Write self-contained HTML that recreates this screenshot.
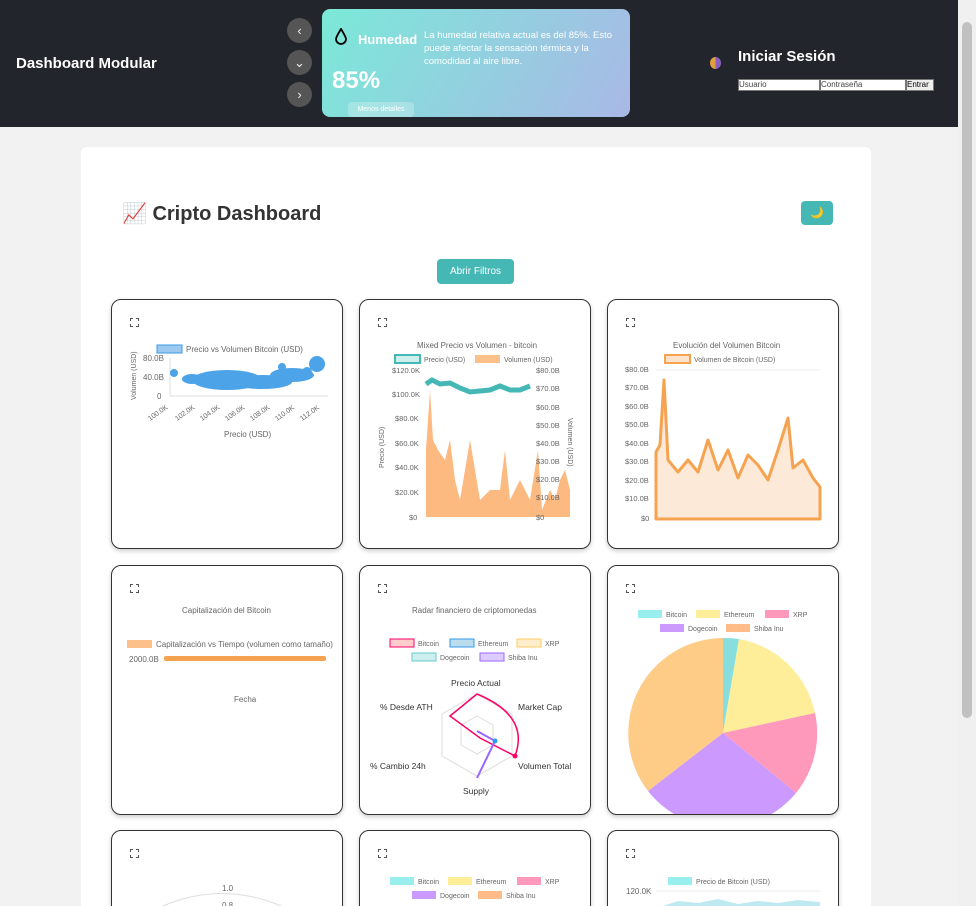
<!DOCTYPE html><html><head><meta charset="utf-8"><style>
*{box-sizing:border-box;margin:0;padding:0}
html,body{width:976px;height:906px;overflow:hidden}
body{background:#f2f2f2;font-family:"Liberation Sans",sans-serif;position:relative}
.hdr{position:absolute;left:0;top:0;width:958px;height:127px;background:#22252c;color:#fff}
.sb{position:absolute;right:0;top:0;width:18px;height:906px;background:#f0f0f0}
.sb .th{position:absolute;left:4px;top:22px;width:10px;height:696px;background:#c1c1c1;border-radius:5px}
.nav{position:absolute;left:287px;width:25px;height:25px;border-radius:50%;background:#555;color:#eee;font-size:13px;text-align:center;line-height:25px}
.card{position:absolute;left:322px;top:9px;width:308px;height:108px;border-radius:8px;background:linear-gradient(120deg,#7be9d8,#a9b8e6)}
.wrap{position:absolute;left:81px;top:147px;width:790px;height:800px;background:#fff;border-radius:6px}
.c{position:absolute;width:232px;height:250px;border:1px solid #333;border-radius:10px;background:#fff;box-shadow:0 2px 5px rgba(0,0,0,.2);overflow:hidden}
.ic{position:absolute;left:18px;top:18px;width:9px;height:9px;border:1px dashed #555}
svg text{font-family:"Liberation Sans",sans-serif;fill:#666}
</style></head><body>
<div class="hdr">
<div style="position:absolute;left:16px;top:55px;font-size:15px;font-weight:bold">Dashboard Modular</div>
<div class="nav" style="top:18px">‹</div><div class="nav" style="top:50px">⌄</div><div class="nav" style="top:82px">›</div>
<div class="card">
<svg style="position:absolute;left:13px;top:19px" width="12" height="17"><path d="M6 1 C3 6 1 9 1 11 A5 5 0 0 0 11 11 C11 9 9 6 6 1Z" fill="none" stroke="#000" stroke-width="1.8"/></svg>
<div style="position:absolute;left:36px;top:23px;font-size:13px;font-weight:bold">Humedad</div>
<div style="position:absolute;left:102px;top:20px;width:200px;font-size:9.5px;line-height:13px">La humedad relativa actual es del 85%. Esto puede afectar la sensación térmica y la comodidad al aire libre.</div>
<div style="position:absolute;left:10px;top:58px;font-size:24px;font-weight:bold">85%</div>
<div style="position:absolute;left:26px;top:93px;width:66px;height:15px;background:rgba(255,255,255,.25);border-radius:4px;font-size:7px;text-align:center;line-height:15px">Menos detalles</div>
</div>
<div style="position:absolute;left:710px;top:57px;width:11px;height:12px;border-radius:50%;background:linear-gradient(90deg,#e0a040 50%,#8a5fc0 50%)"></div>
<div style="position:absolute;left:738px;top:48px;font-size:15px;font-weight:bold">Iniciar Sesión</div>
<div style="position:absolute;left:738px;top:79px;font-size:8px;color:#444">
<span style="position:absolute;left:0;width:82px;height:12px;background:#fff;border:1px solid #777">Usuario</span>
<span style="position:absolute;left:82px;width:86px;height:12px;background:#fff;border:1px solid #777">Contraseña</span>
<span style="position:absolute;left:168px;width:28px;height:12px;background:#eee;border:1px solid #777;color:#000">Entrar</span></div>
</div>
<div class="sb"><div class="th"></div></div>
<div class="wrap">
<div style="position:absolute;left:41px;top:54px;font-size:20px;font-weight:bold;color:#333">📈 Cripto Dashboard</div>
<div style="position:absolute;left:720px;top:54px;width:32px;height:24px;background:#45b8b5;border-radius:4px;font-size:11px;text-align:center;line-height:24px">🌙</div>
<div style="position:absolute;left:356px;top:112px;width:77px;height:25px;background:#45b8b5;border-radius:4px;color:#fff;font-size:10px;text-align:center;line-height:25px">Abrir Filtros</div>
</div>

<div class="c" style="left:111px;top:299px"><div class="ic"></div>
<svg width="232" height="250"><rect x="45" y="45" width="25" height="8" fill="#9cc9ef" stroke="#3a9ae6"/><text x="74" y="52" font-size="8">Precio vs Volumen Bitcoin (USD)</text>
<text transform="translate(24,100) rotate(-90)" font-size="7">Volumen (USD)</text><text x="31" y="61" font-size="8">80.0B</text><text x="31" y="80" font-size="8">40.0B</text><text x="45" y="99" font-size="8">0</text>
<path d="M58 96 H216 M58 58 V96" stroke="#ddd" fill="none"/>
<g fill="#3a9ae6" opacity=".9"><ellipse cx="80" cy="79" rx="10" ry="5"/><ellipse cx="115" cy="80" rx="35" ry="10"/><ellipse cx="150" cy="82" rx="30" ry="7"/><ellipse cx="180" cy="75" rx="22" ry="7"/><circle cx="205" cy="64" r="8"/><circle cx="195" cy="72" r="5"/><circle cx="62" cy="73" r="4"/><circle cx="170" cy="67" r="4"/></g>
<g font-size="7" fill="#666"><text transform="translate(38,121) rotate(-35)">100.0K</text><text transform="translate(65,121) rotate(-35)">102.0K</text><text transform="translate(90,121) rotate(-35)">104.0K</text><text transform="translate(115,121) rotate(-35)">106.0K</text><text transform="translate(140,121) rotate(-35)">108.0K</text><text transform="translate(165,121) rotate(-35)">110.0K</text><text transform="translate(190,121) rotate(-35)">112.0K</text></g>
<text x="112" y="137" font-size="8">Precio (USD)</text></svg></div>

<div class="c" style="left:359px;top:299px"><div class="ic"></div>
<svg width="232" height="250"><text x="57" y="48" font-size="8">Mixed Precio vs Volumen - bitcoin</text>
<rect x="35" y="55" width="25" height="8" fill="#cdf0ec" stroke="#45b8b5" stroke-width="2"/><text x="64" y="62" font-size="7">Precio (USD)</text><rect x="115" y="55" width="25" height="8" fill="#fcc08a"/><text x="144" y="62" font-size="7">Volumen (USD)</text>
<path d="M66 217 L66 150 L70 90 L73 140 L78 150 L85 160 L90 140 L95 180 L100 200 L110 140 L115 170 L120 200 L130 190 L140 190 L145 150 L150 200 L160 180 L170 200 L178 150 L182 210 L190 190 L195 200 L200 180 L205 170 L210 190 L210 217Z" fill="#fbad6a" opacity=".85"/>
<path d="M66 84 L72 80 L80 84 L90 83 L100 88 L110 92 L120 91 L130 90 L140 86 L150 90 L160 90 L170 86" stroke="#45b8b5" stroke-width="5" fill="none"/>
<g font-size="7.5"><text x="32" y="73">$120.0K</text><text x="32" y="97">$100.0K</text><text x="35" y="121">$80.0K</text><text x="35" y="146">$60.0K</text><text x="35" y="170">$40.0K</text><text x="35" y="195">$20.0K</text><text x="49" y="220">$0</text>
<text x="176" y="73">$80.0B</text><text x="176" y="91">$70.0B</text><text x="176" y="110">$60.0B</text><text x="176" y="128">$50.0B</text><text x="176" y="146">$40.0B</text><text x="176" y="164">$30.0B</text><text x="176" y="182">$20.0B</text><text x="176" y="200">$10.0B</text><text x="176" y="220">$0</text></g>
<text transform="translate(24,168) rotate(-90)" font-size="7">Precio (USD)</text><text transform="translate(208,118) rotate(90)" font-size="7">Volumen (USD)</text></svg></div>

<div class="c" style="left:607px;top:299px"><div class="ic"></div>
<svg width="232" height="250"><text x="65" y="48" font-size="8">Evolución del Volumen Bitcoin</text><rect x="57" y="55" width="25" height="8" fill="#fde3cc" stroke="#f5a350" stroke-width="2"/><text x="86" y="62" font-size="7">Volumen de Bitcoin (USD)</text>
<path d="M48 70 H212 M48 219 H212" stroke="#eee"/>
<path d="M48 152 L52 145 L56 80 L60 160 L70 172 L80 160 L90 172 L100 140 L110 170 L120 150 L130 178 L140 155 L150 165 L160 180 L170 150 L180 118 L185 168 L195 160 L205 178 L212 187 L212 219 L48 219Z" fill="#fde9d8" stroke="#f5a350" stroke-width="3" stroke-linejoin="round"/>
<g font-size="7.5"><text x="17" y="72">$80.0B</text><text x="17" y="90">$70.0B</text><text x="17" y="109">$60.0B</text><text x="17" y="127">$50.0B</text><text x="17" y="146">$40.0B</text><text x="17" y="164">$30.0B</text><text x="17" y="183">$20.0B</text><text x="17" y="201">$10.0B</text><text x="33" y="221">$0</text></g></svg></div>

<div class="c" style="left:111px;top:565px"><div class="ic"></div>
<svg width="232" height="250"><text x="70" y="47" font-size="8">Capitalización del Bitcoin</text><rect x="15" y="74" width="25" height="8" fill="#fcc08a"/><text x="44" y="81" font-size="8">Capitalización vs Tiempo (volumen como tamaño)</text>
<text x="17" y="96" font-size="8">2000.0B</text><rect x="52" y="90" width="162" height="5" rx="2" fill="#f5a350"/><text x="122" y="136" font-size="8">Fecha</text></svg></div>

<div class="c" style="left:359px;top:565px"><div class="ic"></div>
<svg width="232" height="250"><text x="52" y="47" font-size="8">Radar financiero de criptomonedas</text>
<text x="58" y="80" font-size="7">Bitcoin</text><text x="118" y="80" font-size="7">Ethereum</text><text x="185" y="80" font-size="7">XRP</text><text x="80" y="94" font-size="7">Dogecoin</text><text x="148" y="94" font-size="7">Shiba Inu</text>
<rect x="30" y="73" width="24" height="8" fill="#fcc" stroke="#f06"/><rect x="90" y="73" width="24" height="8" fill="#bde" stroke="#39e"/><rect x="157" y="73" width="24" height="8" fill="#fec" stroke="#fc6"/><rect x="52" y="87" width="24" height="8" fill="#cee" stroke="#6cc"/><rect x="120" y="87" width="24" height="8" fill="#dcf" stroke="#96f"/>
<text x="91" y="120" font-size="8.5" style="fill:#333">Precio Actual</text><text x="158" y="144" font-size="8.5" style="fill:#333">Market Cap</text><text x="20" y="144" font-size="8.5" style="fill:#333">% Desde ATH</text><text x="158" y="203" font-size="8.5" style="fill:#333">Volumen Total</text><text x="10" y="203" font-size="8.5" style="fill:#333">% Cambio 24h</text><text x="103" y="228" font-size="8.5" style="fill:#333">Supply</text>
<path d="M117 128 L152 148 L152 190 L117 210 L82 190 L82 148Z M117 150 L133 159 L133 179 L117 188 L101 179 L101 159Z" fill="none" stroke="#ddd"/>
<path d="M117 128 Q170 150 155 190 L120 172 L90 150Z" fill="none" stroke="#f06" stroke-width="1.5"/><path d="M117 165 L135 175 L117 212" stroke="#96f" stroke-width="2" fill="none"/><circle cx="135" cy="175" r="2.5" fill="#39e"/><circle cx="155" cy="190" r="2.5" fill="#f06"/></svg></div>

<div class="c" style="left:607px;top:565px"><div class="ic"></div>
<svg width="232" height="250"><rect x="30" y="44" width="24" height="8" fill="#9ee" /><text x="58" y="51" font-size="7">Bitcoin</text><rect x="88" y="44" width="24" height="8" fill="#fe9"/><text x="116" y="51" font-size="7">Ethereum</text><rect x="157" y="44" width="24" height="8" fill="#f9b"/><text x="185" y="51" font-size="7">XRP</text><rect x="52" y="58" width="24" height="8" fill="#c9f"/><text x="80" y="65" font-size="7">Dogecoin</text><rect x="118" y="58" width="24" height="8" fill="#fb8"/><text x="146" y="65" font-size="7">Shiba Inu</text>
<g transform="translate(115,167)"><path d="M0 0 L0 -95 A95 95 0 0 1 16 -94Z" fill="#8dd"/><path d="M0 0 L16 -94 A95 95 0 0 1 92 -20Z" fill="#fe9"/><path d="M0 0 L92 -20 A95 95 0 0 1 73 60Z" fill="#f9b"/><path d="M0 0 L73 60 A95 95 0 0 1 -75 58Z" fill="#c9f"/><path d="M0 0 L-75 58 A95 95 0 0 1 0 -95Z" fill="#fc8"/></g></svg></div>

<div class="c" style="left:111px;top:830px"><div class="ic"></div><svg width="232" height="80"><text x="110" y="60" font-size="8">1.0</text><text x="110" y="77" font-size="8">0.8</text><path d="M40 80 Q110 45 180 80" stroke="#ddd" fill="none"/></svg></div>
<div class="c" style="left:359px;top:830px"><div class="ic"></div><svg width="232" height="80"><rect x="30" y="46" width="24" height="8" fill="#9ee"/><text x="58" y="53" font-size="7">Bitcoin</text><rect x="88" y="46" width="24" height="8" fill="#fe9"/><text x="116" y="53" font-size="7">Ethereum</text><rect x="157" y="46" width="24" height="8" fill="#f9b"/><text x="185" y="53" font-size="7">XRP</text><rect x="52" y="60" width="24" height="8" fill="#c9f"/><text x="80" y="67" font-size="7">Dogecoin</text><rect x="118" y="60" width="24" height="8" fill="#fb8"/><text x="146" y="67" font-size="7">Shiba Inu</text></svg></div>
<div class="c" style="left:607px;top:830px"><div class="ic"></div><svg width="232" height="80"><rect x="60" y="46" width="24" height="8" fill="#9ee"/><text x="88" y="53" font-size="7">Precio de Bitcoin (USD)</text><text x="18" y="63" font-size="8">120.0K</text><path d="M48 60 H212" stroke="#eee"/><path d="M55 75 L70 70 L90 72 L110 68 L130 73 L150 70 L170 72 L190 69 L212 71 V80 H55Z" fill="#bfe9f0"/></svg></div>
</body></html>
